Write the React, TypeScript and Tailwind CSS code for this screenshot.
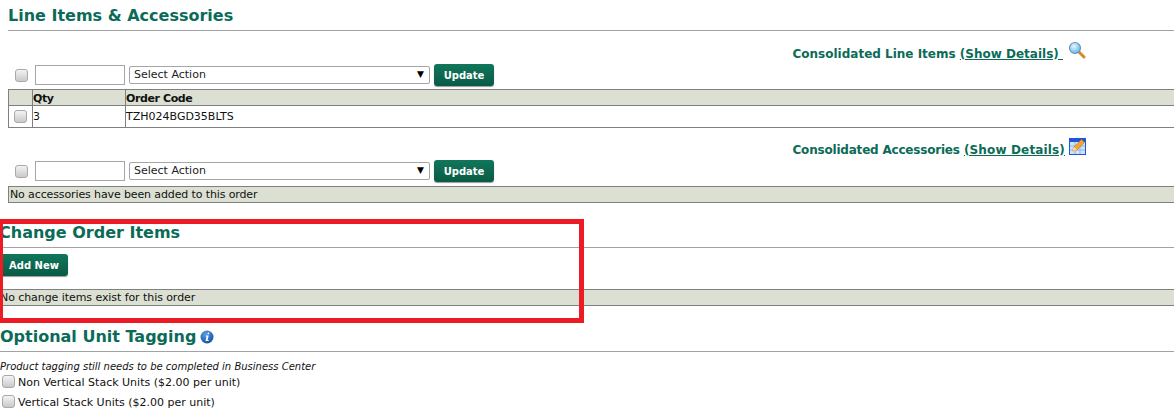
import React from "react"

const Check = ({ className = "" }: { className?: string }) => (
  <input
    type="checkbox"
    className={`m-0 h-[13px] w-[13px] shrink-0 appearance-none rounded-[3px] border border-[#a9a9a9] bg-gradient-to-b from-[#f4f4f4] to-[#c9c9c9] ${className}`}
  />
)

const Update = ({ label = "Update", className = "" }: { label?: string; className?: string }) => (
  <button
    className={`flex h-[22px] items-center justify-center rounded-[3px] bg-gradient-to-b from-[#10775b] to-[#0a5a45] text-[10px] font-bold text-white shadow-[0_1px_1px_#999] ${className}`}
  >
    {label}
  </button>
)

const Heading = ({ children, className = "" }: { children: React.ReactNode; className?: string }) => (
  <div className={`border-b border-[#a3a3a3] ${className}`}>
    <h2 className="flex items-center gap-[4px] text-[16px] leading-5 font-bold text-[#0b6b58]">{children}</h2>
  </div>
)

const ActionRow = () => (
  <div className="flex h-[22px] items-center pl-[7px]">
    <Check />
    <input className="ml-[7px] h-[20px] w-[90px] border border-[#a6a6a6] bg-white" />
    <div className="ml-[4px] flex h-[18px] w-[301px] items-center justify-between rounded-[2px] border border-[#a6a6a6] bg-white pr-[5px] pl-[4px] text-[11px] text-[#222]">
      <span>Select Action</span>
      <span className="text-[9px] text-black">▼</span>
    </div>
    <Update className="ml-[4px] w-[60px]" />
  </div>
)

const Notice = ({ children }: { children: React.ReactNode }) => (
  <div className="flex h-[17px] items-center border-y border-[#808080] bg-[#dbe0d2] pt-px text-[11px] text-[#111]">
    {children}
  </div>
)

const Magnifier = () => (
  <svg width="18" height="18" viewBox="0 0 18 18" className="mb-[7px]">
    <defs>
      <radialGradient id="lens" cx="40%" cy="35%" r="70%">
        <stop offset="0" stopColor="#e8f6ff" />
        <stop offset="1" stopColor="#5cb2ee" />
      </radialGradient>
    </defs>
    <path d="M10.5 10.5 L16 16" stroke="#d98a2b" strokeWidth="3" strokeLinecap="round" />
    <circle cx="7" cy="7" r="5.5" fill="url(#lens)" stroke="#6f94b5" strokeWidth="1.2" />
  </svg>
)

const EditSheet = () => (
  <svg width="17" height="17" viewBox="0 0 17 17" className="mb-[7px]">
    <rect x="0.5" y="0.5" width="16" height="16" fill="#cfe3fb" stroke="#1f55d6" />
    <rect x="1" y="1" width="15" height="3" fill="#1f55d6" />
    <path d="M1 8H16M1 12H16M6 4V16M11 4V16" stroke="#8db6ec" strokeWidth="1" />
    <path d="M3.5 13 L5 9 L12.5 1.5 L15.5 4.5 L8 12 Z" fill="#f4a62a" stroke="#c9701a" strokeWidth="0.6" />
    <path d="M3.5 13 L5 9 L8 12 Z" fill="#fbe3b5" />
  </svg>
)

const InfoIcon = () => (
  <svg width="14" height="14" viewBox="0 0 14 14">
    <defs>
      <radialGradient id="info" cx="40%" cy="30%" r="75%">
        <stop offset="0" stopColor="#5b9ee6" />
        <stop offset="1" stopColor="#0f4f9e" />
      </radialGradient>
    </defs>
    <circle cx="7" cy="7" r="6.5" fill="url(#info)" />
    <path d="M7.9 2.6h1.5l-.4 1.6H7.5zM6 5.6h2.6L7.6 10h1v1H5.6l1-4.4H5.7z" fill="#fff" />
  </svg>
)

export default function App() {
  return (
    <div className="relative h-[418px] w-[1174px] overflow-hidden bg-white font-['DejaVu_Sans',Verdana,sans-serif] text-[11px] text-[#111]">
      <section className="pt-[6px] pl-[8px]">
        <Heading className="h-[25px]">Line Items &amp; Accessories</Heading>

        <div className="flex h-[33px] items-center justify-end gap-[5px] pt-[12px] pr-[88px] text-[12px] font-bold text-[#0b6b58]">
          <span>
            Consolidated Line Items{" "}
            <span className="underline">(Show Details)&nbsp;</span>
          </span>
          <Magnifier />
        </div>
        <ActionRow />

        <div className="mt-[3px] grid grid-cols-[24px_93px_1fr] border-y border-l border-[#808080]">
          <div className="h-[16px] border-r border-b border-[#808080] bg-[#dbe0d2]" />
          <div className="h-[16px] border-r border-b border-[#808080] bg-[#dbe0d2] leading-[17px] font-bold tracking-[-0.4px]">Qty</div>
          <div className="h-[16px] border-b border-[#808080] bg-[#dbe0d2] leading-[17px] font-bold tracking-[-0.4px]">Order Code</div>
          <div className="flex h-[21px] items-center justify-center border-r border-[#808080]">
            <Check />
          </div>
          <div className="flex h-[21px] items-center border-r border-[#808080] pt-[2px]">3</div>
          <div className="flex h-[21px] items-center pt-[2px]">TZH024BGD35BLTS</div>
        </div>

        <div className="flex h-[32px] items-center justify-end gap-[4px] pt-[11px] pr-[88px] text-[12px] font-bold text-[#0b6b58]">
          <span>
            <span className="tracking-[-0.2px]">Consolidated Accessories</span>{" "}
            <span className="tracking-[0.15px] underline">(Show Details)</span>
          </span>
          <EditSheet />
        </div>
        <ActionRow />

        <div className="mt-[4px] border-l border-[#808080]">
          <Notice>
            <span className="pl-px tracking-[-0.12px]">No accessories have been added to this order</span>
          </Notice>
        </div>
      </section>

      <section className="mt-[20px]">
        <Heading className="h-[25px]">
          <span className="-ml-px">Change Order Items</span>
        </Heading>
        <Update label="Add New" className="mt-[6px] w-[68px]" />
        <div className="mt-[13px]">
          <Notice>
            <span className="tracking-[-0.07px]">No change items exist for this order</span>
          </Notice>
        </div>
      </section>

      <section className="mt-[21px]">
        <Heading className="h-[25px]">
          Optional Unit Tagging <InfoIcon />
        </Heading>
        <p className="mt-[9px] text-[10px] leading-[12px] italic">Product tagging still needs to be completed in Business Center</p>
        <label className="flex h-[20px] items-center gap-[3px] pl-[2px]">
          <Check className="-mt-[3px]" />
          <span>Non Vertical Stack Units ($2.00 per unit)</span>
        </label>
        <label className="flex h-[20px] items-center gap-[3px] pl-[2px]">
          <Check className="-mt-[3px]" />
          <span>Vertical Stack Units ($2.00 per unit)</span>
        </label>
      </section>

      {/* red annotation drawn over the screenshot */}
      <div className="absolute top-[219px] left-[-2px] h-[104px] w-[586px] border-[5px] border-[#ed1c24]" />
    </div>
  )
}
